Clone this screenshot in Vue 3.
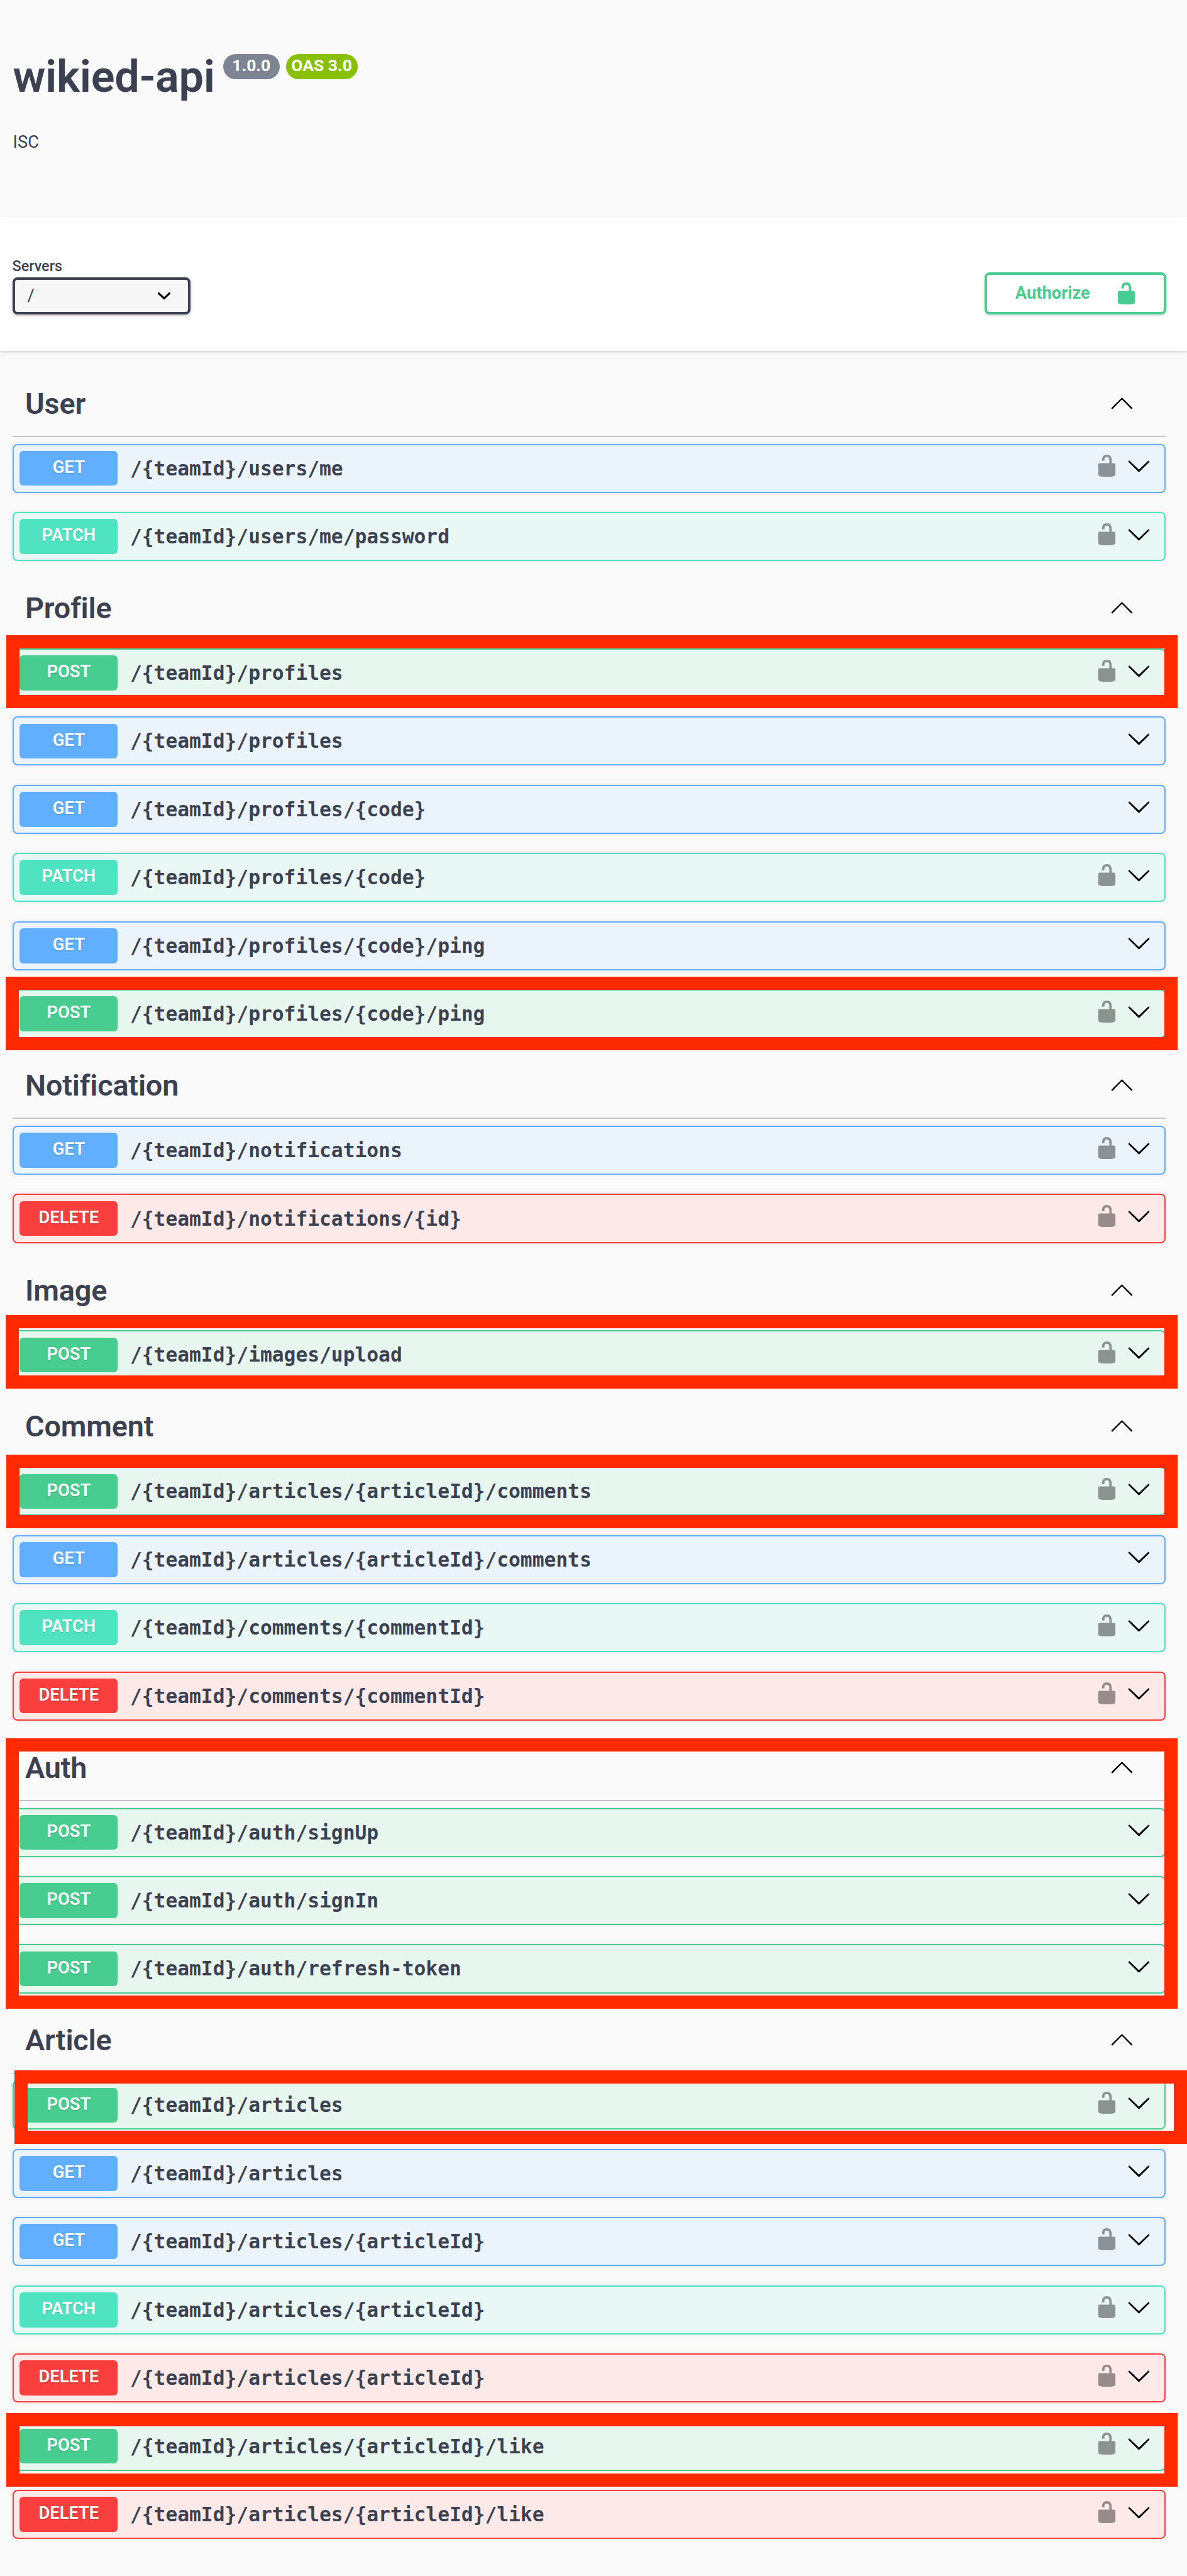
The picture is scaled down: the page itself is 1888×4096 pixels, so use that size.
<script setup>
const S = 0.976
const sections = [
  { name: 'User', rows: [['GET', '/{teamId}/users/me', 1], ['PATCH', '/{teamId}/users/me/password', 1]] },
  { name: 'Profile', rows: [
    ['POST', '/{teamId}/profiles', 1], ['GET', '/{teamId}/profiles', 0], ['GET', '/{teamId}/profiles/{code}', 0],
    ['PATCH', '/{teamId}/profiles/{code}', 1], ['GET', '/{teamId}/profiles/{code}/ping', 0], ['POST', '/{teamId}/profiles/{code}/ping', 1]] },
  { name: 'Notification', rows: [['GET', '/{teamId}/notifications', 1], ['DELETE', '/{teamId}/notifications/{id}', 1]] },
  { name: 'Image', rows: [['POST', '/{teamId}/images/upload', 1]] },
  { name: 'Comment', rows: [
    ['POST', '/{teamId}/articles/{articleId}/comments', 1], ['GET', '/{teamId}/articles/{articleId}/comments', 0],
    ['PATCH', '/{teamId}/comments/{commentId}', 1], ['DELETE', '/{teamId}/comments/{commentId}', 1]] },
  { name: 'Auth', rows: [['POST', '/{teamId}/auth/signUp', 0], ['POST', '/{teamId}/auth/signIn', 0], ['POST', '/{teamId}/auth/refresh-token', 0]] },
  { name: 'Article', rows: [
    ['POST', '/{teamId}/articles', 1], ['GET', '/{teamId}/articles', 0], ['GET', '/{teamId}/articles/{articleId}', 1],
    ['PATCH', '/{teamId}/articles/{articleId}', 1], ['DELETE', '/{teamId}/articles/{articleId}', 1],
    ['POST', '/{teamId}/articles/{articleId}/like', 1], ['DELETE', '/{teamId}/articles/{articleId}/like', 1]] }
]
// red annotation frames, in reference pixels: left, top, right, bottom
const frames = [
  [10, 1035, 1919, 1154], [9, 1591, 1919, 1711], [9, 2142, 1919, 2262], [10, 2370, 1919, 2490],
  [9, 2832, 1919, 3273], [24, 3373, 1934, 3493], [10, 3931, 1919, 4051]
]
const frameStyle = ([l, t, r, b]) => ({
  left: l * S + 'px', top: t * S + 'px', width: (r - l) * S + 'px', height: (b - t) * S + 'px'
})
const lockPath = 'M15.8 8H14V5.6C14 2.703 12.665 1 10 1 7.334 1 6 2.703 6 5.6V6h2v-.801C8 3.754 8.797 3 10 3c1.203 0 2 .754 2 2.199V8H4c-.553 0-1 .646-1 1.199V17c0 .549.428 1.139.951 1.307l1.197.387C5.672 18.861 6.55 19 7.1 19h5.8c.549 0 1.428-.139 1.951-.307l1.196-.387c.524-.167.953-.757.953-1.306V9.199C17 8.646 16.352 8 15.8 8z'
const downPath = 'M17.418 6.109c.272-.268.709-.268.979 0s.271.701 0 .969l-7.908 7.83c-.27.268-.707.268-.979 0l-7.908-7.83c-.27-.268-.27-.701 0-.969.271-.268.709-.268.979 0L10 13.25l7.418-7.141z'
const upPath = 'M17.418 14.908c.272.268.709.268.979 0s.271-.701 0-.969l-7.908-7.83c-.27-.268-.707-.268-.979 0l-7.908 7.83c-.27.268-.27.701 0 .969.271.268.709.268.979 0L10 7.25l7.418 7.658z'
const selectPath = 'M13.418 7.859c.271-.268.709-.268.978 0 .27.268.272.701 0 .969l-3.908 3.83c-.27.268-.707.268-.979 0l-3.908-3.83c-.27-.268-.27-.701 0-.969.271-.268.709-.268.978 0L10 11l3.418-3.141z'
</script>

<template>
  <div class="page">
    <header class="info">
      <div class="title-line">
        <h1 class="title">wikied-api</h1>
        <span class="badge version">1.0.0</span>
        <span class="badge oas">OAS 3.0</span>
      </div>
      <p class="license">ISC</p>
    </header>

    <div class="scheme">
      <div class="servers">
        <span class="servers-label">Servers</span>
        <div class="select">
          <span class="select-value">/</span>
          <svg class="select-arrow" viewBox="0 0 20 20"><path :d="selectPath" /></svg>
        </div>
      </div>
      <button class="authorize">
        <span>Authorize</span>
        <svg class="auth-lock" viewBox="0 0 20 20"><path :d="lockPath" /></svg>
      </button>
    </div>

    <main class="tags">
      <section v-for="sec in sections" :key="sec.name" class="tag">
        <div class="tag-head">
          <h3 class="tag-name">{{ sec.name }}</h3>
          <svg class="tag-arrow" viewBox="0 0 20 20"><path :d="upPath" /></svg>
        </div>
        <div class="ops">
          <div v-for="row in sec.rows" :key="row[0] + row[1]" class="op" :class="row[0].toLowerCase()">
            <span class="method">{{ row[0] }}</span>
            <span class="path">{{ row[1] }}</span>
            <svg v-if="row[2]" class="op-lock" viewBox="0 0 20 20"><path :d="lockPath" /></svg>
            <svg class="op-arrow" viewBox="0 0 20 20"><path :d="downPath" /></svg>
          </div>
        </div>
      </section>
    </main>

    <div v-for="(f, i) in frames" :key="i" class="frame" :style="frameStyle(f)"></div>
  </div>
</template>

<style>
html, body { margin: 0; background: #fafafa; }
</style>

<style scoped>
.page {
  position: relative;
  width: 1888px;
  height: 4096px;
  overflow: hidden;
  background: #fafafa;
  color: #3b4151;
  font-family: Roboto, "Noto Sans", sans-serif;
}
.info {
  box-sizing: border-box;
  height: 344.5px;
  padding: 74.4px 0 0 20.5px;
  background: #fafafa;
}
.title-line { display: flex; align-items: flex-start; }
.title {
  margin: 0;
  font-size: 70.3px;
  line-height: 96px;
  font-weight: 600;
  letter-spacing: -0.3px;
}
.badge {
  box-sizing: border-box;
  height: 40px;
  margin-top: 11.5px;
  border-radius: 20px;
  color: #fff;
  font-size: 26.5px;
  line-height: 35px;
  font-weight: 700;
  text-align: center;
}
.version { width: 90px; margin-left: 13px; background: #7d8492; }
.oas { width: 114px; margin-left: 9.8px; background: #89bf04; }
.license {
  margin: 36.5px 0 0;
  font-size: 27.3px;
  line-height: 38px;
  font-weight: 400;
}
.scheme {
  position: relative;
  box-sizing: border-box;
  display: flex;
  justify-content: space-between;
  align-items: flex-start;
  height: 213.8px;
  padding: 65.3px 33.2px 0 19.5px;
  background: #fff;
  box-shadow: 0 2px 4px rgba(0, 0, 0, 0.15);
}
.servers { display: flex; flex-direction: column; }
.servers-label {
  font-size: 23.4px;
  line-height: 27.3px;
  font-weight: 500;
  margin-bottom: 4px;
}
.select {
  box-sizing: border-box;
  display: flex;
  align-items: center;
  justify-content: space-between;
  width: 283px;
  height: 58.6px;
  padding: 0 16px 0 20px;
  border: 4px solid #3b4151;
  border-radius: 7.8px;
  background: #f7f7f7;
  box-shadow: 0 2px 4px rgba(0, 0, 0, 0.25);
}
.select-value { font-size: 27.3px; font-weight: 400; }
.select-arrow { width: 44px; height: 44px; fill: #000; }
.authorize {
  box-sizing: border-box;
  display: flex;
  align-items: center;
  justify-content: flex-end;
  width: 289px;
  height: 66.4px;
  margin-top: 23.5px;
  padding: 0 40px 0 0;
  border: 4px solid #49cc90;
  border-radius: 7.8px;
  background: transparent;
  box-shadow: 0 2px 4px rgba(0, 0, 0, 0.15);
  color: #49cc90;
  font-family: Roboto, sans-serif;
  font-size: 27.3px;
  font-weight: 700;
}
.auth-lock { width: 39px; height: 39px; margin-left: 38px; fill: #49cc90; }
.tags {
  display: flex;
  flex-direction: column;
  gap: 20.75px;
  padding: 29.2px 33.6px 0 19.5px;
}
.tag-head {
  box-sizing: border-box;
  display: flex;
  align-items: center;
  justify-content: space-between;
  height: 107.4px;
  margin-bottom: 10.7px;
  padding: 0 50.9px 0 20.5px;
  border-bottom: 2px solid #c3c5c9;
}
.tag-name {
  margin: 0;
  padding-top: 3px;
  font-size: 46.85px;
  line-height: 64px;
  font-weight: 600;
  letter-spacing: -0.2px;
}
.tag-arrow { width: 39px; height: 39px; fill: #000; }
.ops { display: flex; flex-direction: column; gap: 30.35px; }
.op {
  box-sizing: border-box;
  display: flex;
  align-items: center;
  height: 78.1px;
  padding: 0 21.5px 0 9.8px;
  border: 2px solid;
  border-radius: 7.8px;
  box-shadow: 0 0 5px rgba(0, 0, 0, 0.12);
}
.method {
  flex: none;
  width: 156.2px;
  height: 55.6px;
  border-radius: 5.9px;
  color: #fff;
  font-size: 27.3px;
  line-height: 52px;
  font-weight: 600;
  text-align: center;
  text-shadow: 0 2px 0 rgba(0, 0, 0, 0.1);
}
.path {
  flex: 1;
  padding-left: 19.5px;
  font-family: "DejaVu Sans Mono", monospace;
  font-size: 31.25px;
  line-height: 44px;
  font-weight: 700;
}
.op-lock, .op-arrow { flex: none; width: 39px; height: 39px; margin-bottom: 7.8px; }
.op-lock { margin-right: 11.7px; fill: #000; opacity: 0.4; }
.op-arrow { fill: #000; }
.get { background: #ebf3fb; border-color: #61affe; }
.get .method { background: #61affe; }
.post { background: #e8f6f0; border-color: #49cc90; }
.post .method { background: #49cc90; }
.patch { background: #e9f8f5; border-color: #50e3c2; }
.patch .method { background: #50e3c2; }
.delete { background: #fee9e9; border-color: #f93e3e; }
.delete .method { background: #f93e3e; }
.frame {
  position: absolute;
  box-sizing: border-box;
  border: 21.5px solid #ff2a00;
  pointer-events: none;
}
</style>
